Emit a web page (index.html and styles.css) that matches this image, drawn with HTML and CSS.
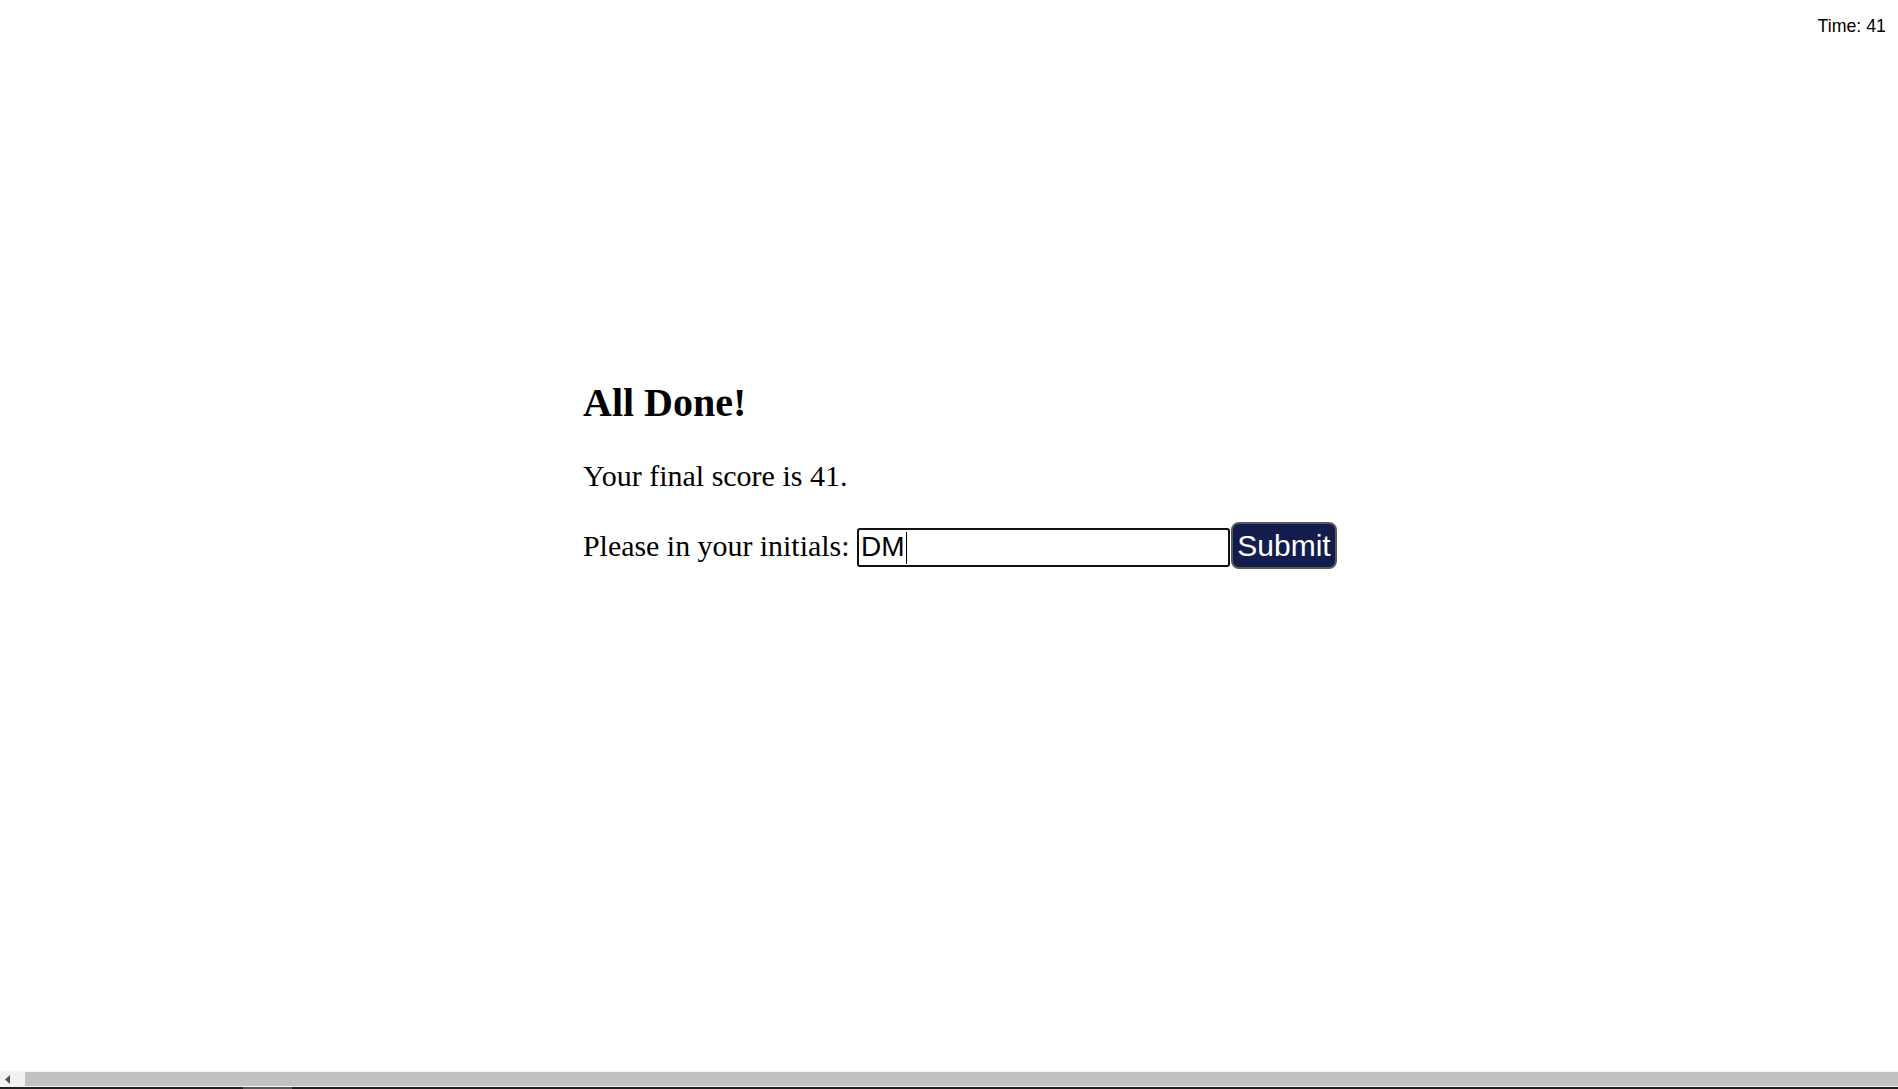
FILE: index.html
```html
<!DOCTYPE html>
<html lang="en">
<head>
<meta charset="utf-8">
<title>Quiz</title>
<link rel="stylesheet" href="styles.css">
</head>
<body>
<div class="page">
  <header class="topbar"><span class="timer">Time: 41</span></header>
  <main class="quiz">
    <h1 class="title">All Done!</h1>
    <p class="score">Your final score is 41.</p>
    <div class="entry"><label class="entry-label" for="initials">Please in your initials:</label> <span class="field"><input id="initials" class="initials" type="text" value="DM"><span class="caret"></span></span><button class="submit" type="button">Submit</button></div>
  </main>
  <div class="hscroll">
    <div class="hs-btn"><svg width="6" height="9" viewBox="0 0 6 9"><path d="M5 0 L5 9 L0 4.5 Z" fill="#505050"/></svg></div>
    <div class="hs-thumb"></div>
  </div>
  <div class="edge"><span class="edge-seg"></span></div>
</div>
</body>
</html>
```
FILE: styles.css
```css
html, body {
  margin: 0;
  padding: 0;
  background: #ffffff;
}
.page {
  height: 100vh;
  display: flex;
  flex-direction: column;
  overflow: hidden;
}
.topbar {
  display: flex;
  justify-content: flex-end;
  padding: 16px 12px 0 0;
  height: 20px;
}
.timer {
  font-family: "Liberation Sans", Arial, sans-serif;
  font-size: 17.8px;
  line-height: 20px;
  color: #000;
}
.quiz {
  flex: 1;
  width: 732px;
  margin: 0 auto;
  padding-top: 344px;
  font-family: "Liberation Serif", "Times New Roman", serif;
  color: #000;
}
.title {
  margin: 0 0 34px 0;
  font-size: 40px;
  font-weight: bold;
  line-height: 45px;
}
.score {
  margin: 0 0 30px 0;
  font-size: 30px;
  line-height: 33px;
}
.entry {
  font-size: 29.9px;
  line-height: 33px;
  white-space: nowrap;
}
.field {
  position: relative;
  display: inline-block;
}
.initials {
  box-sizing: border-box;
  width: 373px;
  height: 39px;
  margin: 0;
  padding: 1px 2px 1px 2px;
  border: 2px solid #111;
  border-radius: 3px;
  font-family: "Liberation Sans", Arial, sans-serif;
  font-size: 28px;
  color: #000;
  background: #fff;
  outline: none;
  vertical-align: baseline;
}
.caret {
  position: absolute;
  left: 49px;
  top: 4px;
  width: 1px;
  height: 32px;
  background: #000;
}
.submit {
  box-sizing: border-box;
  width: 106px;
  height: 47px;
  margin: 0 0 0 1px;
  padding: 5px 4px;
  border: 2px solid #5a5a5a;
  border-radius: 8px;
  background: #131d4d;
  color: #fff;
  font-family: "Liberation Sans", Arial, sans-serif;
  font-size: 30px;
  vertical-align: baseline;
}
.hscroll {
  display: flex;
  height: 16px;
  background: #f1f1f1;
  box-sizing: border-box;
  padding: 1px 0 1px 0;
}
.hs-btn {
  width: 25px;
  display: flex;
  align-items: center;
  justify-content: center;
}
.hs-btn svg {
  margin-right: 9px;
}
.hs-thumb {
  flex: 1;
  background: #c1c1c1;
}
.edge {
  height: 2px;
  background: #202020;
  display: flex;
}
.edge-seg {
  width: 49px;
  margin-left: 243px;
  background: #555;
}
```
